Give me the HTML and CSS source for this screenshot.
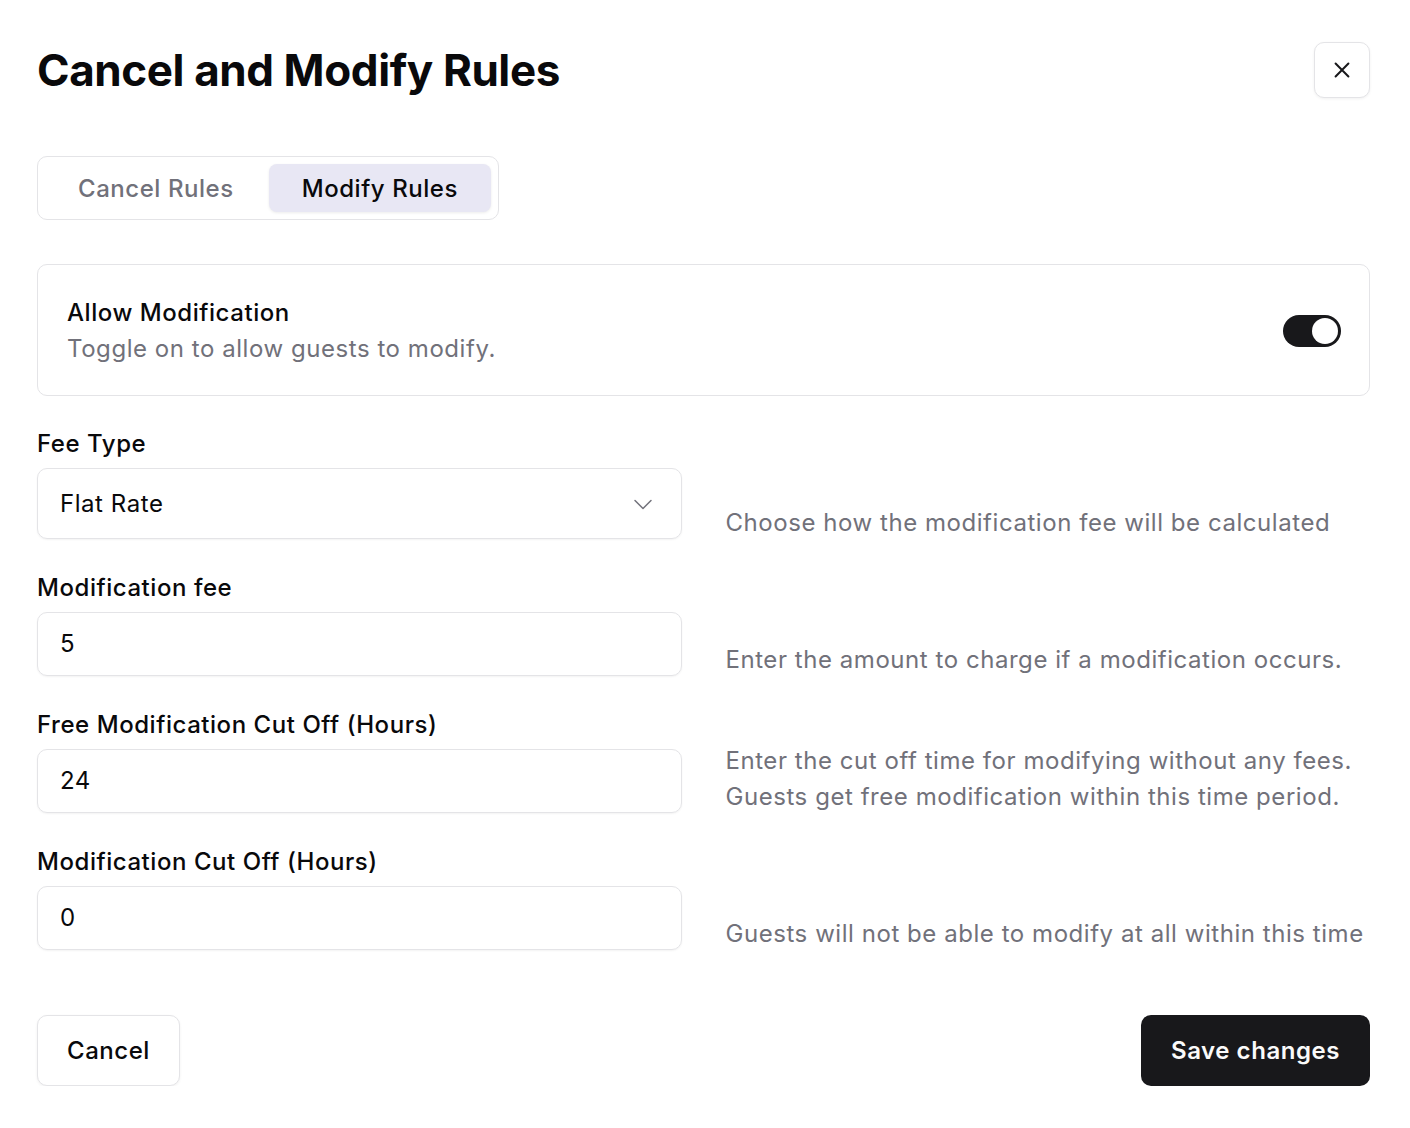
FILE: index.html
```html
<!DOCTYPE html>
<html lang="en">
<head>
    <meta charset="UTF-8">
    <meta name="viewport" content="width=device-width, initial-scale=1.0">
    <title>Cancel and Modify Rules</title>
    <link rel="stylesheet" href="styles.css">
</head>
<body>
    <div class="dialog">
        <header class="dialog-header">
            <h1>Cancel and Modify Rules</h1>
            <button class="close-button" aria-label="Close">
                <svg width="22" height="22" viewBox="0 0 24 24" fill="none" stroke="currentColor" stroke-width="2.2" stroke-linecap="round">
                    <path d="M5 5l14 14M19 5L5 19"/>
                </svg>
            </button>
        </header>

        <!-- Tabs -->
        <div class="tabs">
            <button class="tab">Cancel Rules</button>
            <button class="tab active">Modify Rules</button>
        </div>

        <!-- Allow modification -->
        <div class="switch-card">
            <div>
                <div class="switch-title">Allow Modification</div>
                <div class="switch-desc">Toggle on to allow guests to modify.</div>
            </div>
            <span class="switch on"><span class="knob"></span></span>
        </div>

        <div class="fields">
            <div class="field">
                <label>Fee Type</label>
                <div class="select">
                    <span>Flat Rate</span>
                    <svg width="24" height="24" viewBox="0 0 24 24" fill="none" stroke="#71717a" stroke-width="1.5" stroke-linecap="round" stroke-linejoin="round">
                        <path d="M4 8.5l8 8 8-8"/>
                    </svg>
                </div>
            </div>
            <p class="hint">Choose how the modification fee will be calculated</p>

            <div class="field">
                <label>Modification fee</label>
                <div class="input">5</div>
            </div>
            <p class="hint">Enter the amount to charge if a modification occurs.</p>

            <div class="field">
                <label>Free Modification Cut Off (Hours)</label>
                <div class="input">24</div>
            </div>
            <p class="hint">Enter the cut off time for modifying without any fees. Guests get free modification within this time period.</p>

            <div class="field">
                <label>Modification Cut Off (Hours)</label>
                <div class="input">0</div>
            </div>
            <p class="hint">Guests will not be able to modify at all within this time</p>
        </div>

        <footer class="dialog-footer">
            <button class="btn btn-outline">Cancel</button>
            <button class="btn btn-primary">Save changes</button>
        </footer>
    </div>
</body>
</html>
```

FILE: styles.css
```css
/* Global Styles */
body {
    margin: 0;
    background: #ffffff;
    color: #09090b;
    font-family: Inter, 'Noto Sans', Arial, sans-serif;
    font-size: 24px;
    line-height: 36px;
    letter-spacing: 0.55px;
}

button {
    font-family: inherit;
    letter-spacing: inherit;
    cursor: pointer;
}

.dialog {
    width: 1333px;
    margin-left: 37px;
    padding-top: 42px;
}

/* Header */
.dialog-header {
    display: flex;
    justify-content: space-between;
    align-items: center;
    height: 56px;
}

.dialog-header h1 {
    margin: 0;
    font-size: 44px;
    font-weight: 700;
    letter-spacing: -0.4px;
    line-height: 56px;
}

.close-button {
    width: 56px;
    height: 56px;
    display: flex;
    align-items: center;
    justify-content: center;
    background: #ffffff;
    color: #18181b;
    border: 1px solid #e4e4e7;
    border-radius: 10px;
    box-shadow: 0 1px 3px rgba(0, 0, 0, 0.06);
    padding: 0;
}

/* Tabs */
.tabs {
    display: inline-flex;
    gap: 2px;
    margin-top: 58px;
    padding: 7px;
    border: 1px solid #e4e4e7;
    border-radius: 10px;
}

.tab {
    height: 48px;
    padding: 0 33px;
    border: none;
    border-radius: 8px;
    background: transparent;
    color: #71717a;
    font-size: 24px;
    font-weight: 500;
}

.tab.active {
    background: #e8e7f4;
    color: #09090b;
    box-shadow: 0 1px 3px rgba(0, 0, 0, 0.08);
}

/* Switch card */
.switch-card {
    display: flex;
    align-items: center;
    justify-content: space-between;
    margin-top: 44px;
    padding: 30px 29px 28px;
    border: 1px solid #e4e4e7;
    border-radius: 10px;
}

.switch-title {
    font-weight: 500;
}

.switch-desc {
    color: #71717a;
}

.switch {
    display: flex;
    align-items: center;
    width: 58px;
    height: 32px;
    padding: 3px;
    margin-right: -1px;
    box-sizing: border-box;
    border-radius: 16px;
    background: #18181b;
}

.switch .knob {
    width: 26px;
    height: 26px;
    border-radius: 50%;
    background: #ffffff;
    margin-left: auto;
}

/* Fields */
.fields {
    display: grid;
    grid-template-columns: 1fr 1fr;
    column-gap: 44px;
    row-gap: 29px;
    margin-top: 28px;
}

.field label {
    display: block;
    font-weight: 500;
    padding-top: 2px;
    margin-bottom: 6px;
}

.select,
.input {
    display: flex;
    align-items: center;
    box-sizing: border-box;
    height: 64px;
    padding: 0 22px;
    border: 1px solid #e4e4e7;
    border-radius: 10px;
    box-shadow: 0 1px 2px rgba(0, 0, 0, 0.05);
}

.select {
    height: 71px;
    justify-content: space-between;
    padding-right: 26px;
}

.hint {
    align-self: end;
    margin: 0 0 -2px;
    color: #71717a;
}

/* Footer */
.dialog-footer {
    display: flex;
    justify-content: space-between;
    margin-top: 65px;
}

.btn {
    height: 71px;
    padding: 0 29px;
    border-radius: 10px;
    font-size: 24px;
    font-weight: 500;
}

.btn-outline {
    background: #ffffff;
    color: #09090b;
    border: 1px solid #e4e4e7;
    box-shadow: 0 1px 3px rgba(0, 0, 0, 0.06);
}

.btn-primary {
    background: #18181b;
    color: #fafafa;
    border: none;
    font-weight: 600;
    padding: 0 30px;
}
```
